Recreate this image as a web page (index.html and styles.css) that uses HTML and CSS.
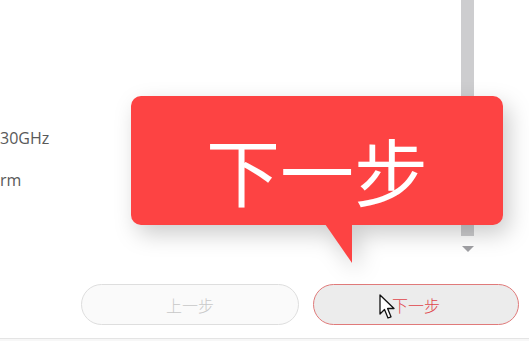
FILE: index.html
```html
<!DOCTYPE html>
<html>
<head>
<meta charset="utf-8" />
<title>安装向导</title>
<link rel="stylesheet" href="styles.css">
</head>
<body>
	<div class="page">
		<div class="main">
			<div class="info">
				<p class="line">30GHz</p>
				<p class="line">rm</p>
			</div>
			<div class="scroll">
				<span class="thumb"></span>
				<span class="arrow"></span>
			</div>
		</div>
		<div class="footer">
			<button class="btn btn-prev">上一步</button>
			<button class="btn btn-next">下一步</button>
		</div>
	</div>

	<div class="tip">下一步</div>

	<svg class="cursor" width="18" height="27" viewBox="0 0 18 27">
		<path d="M1 1 L1 20 L5.5 15.5 L9 24 L12 22.8 L8.6 14.5 L15 14.5 Z" fill="#fff" stroke="#111" stroke-width="1.3" stroke-linejoin="round"/>
	</svg>
</body>
</html>
```

FILE: styles.css
```css
*{margin:0;padding:0;box-sizing:border-box;}
body{width:529px;height:341px;overflow:hidden;background:#f7f7f7;font-family:"Open Sans","Noto Sans CJK SC",sans-serif;position:relative;}
.page{height:339px;background:#fff;border-bottom:1px solid #e4e4e4;display:flex;flex-direction:column;}
.main{height:284px;display:flex;}
.info{flex:1;padding-top:128px;color:#595959;font-size:16px;}
.info .line{height:21px;line-height:21px;margin-bottom:21px;}
.scroll{width:13px;margin-right:55px;display:flex;flex-direction:column;align-items:center;}
.thumb{width:13px;height:236px;background:#cdcdcf;}
.arrow{margin-top:10px;width:0;height:0;border-left:6px solid transparent;border-right:6px solid transparent;border-top:6px solid #a0a0a4;}
.footer{display:flex;gap:14px;padding-left:81px;}
.btn{height:41px;border-radius:21px;font-size:16px;font-weight:300;font-family:"Noto Sans CJK SC",sans-serif;background:#fafafa;}
.btn-prev{width:218px;border:1px solid #dedede;color:#c8c8c8;}
.btn-next{width:206px;border:1px solid #e07a7a;background:#ececec;color:#e0444a;}
.tip{position:absolute;left:131px;top:96px;width:372px;height:129px;border-radius:10px;background:#fd4343;color:#fff;font-family:"Noto Sans CJK SC",sans-serif;font-weight:400;font-size:74px;line-height:129px;padding-top:8px;text-align:center;filter:drop-shadow(6px 9px 11px rgba(0,0,0,.2));}
.tip::after{content:"";position:absolute;left:194px;top:128px;width:27px;height:39px;background:#fd4343;clip-path:polygon(0 0,100% 0,100% 100%);}
.cursor{position:absolute;left:379px;top:294px;}
```
